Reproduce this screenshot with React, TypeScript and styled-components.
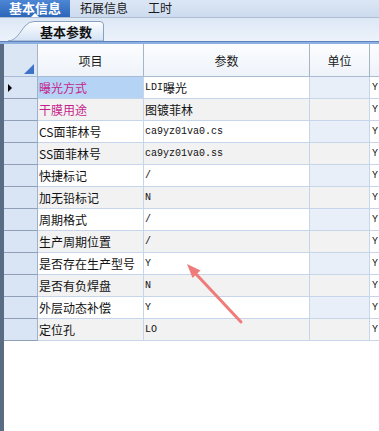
import React from "react";
import styled, { createGlobalStyle } from "styled-components";

const GlobalStyle = createGlobalStyle`
  html, body {
    margin: 0;
    padding: 0;
    background: #fff;
  }
  body {
    font-family: "Noto Sans CJK SC", "Liberation Sans", sans-serif;
  }
`;

const COLS = "34px 106px 166px 60px 40px";

const Page = styled.div`
  position: relative;
  width: 379px;
  height: 431px;
  overflow: hidden;
  display: flex;
  flex-direction: column;
  background: #fff;
`;

const TopBar = styled.div`
  display: flex;
  height: 17px;
  background: linear-gradient(#dce7f5, #ccdbef);
  border-bottom: 1px solid #aebdd1;
`;

const TopTab = styled.div<{ $active?: boolean }>`
  position: relative;
  display: flex;
  align-items: center;
  padding: 0 ${({ $active }) => ($active ? "9px" : "10px")} 2px;
  font-size: ${({ $active }) => ($active ? "13px" : "12px")};
  font-weight: ${({ $active }) => ($active ? "bold" : "normal")};
  line-height: 1;
  color: ${({ $active }) => ($active ? "#fff" : "#1a1a1a")};
  background: ${({ $active }) =>
    $active ? "linear-gradient(#4d86d4, #2c66ba)" : "transparent"};
`;

const Caret = styled.span`
  position: absolute;
  left: 50%;
  bottom: 0;
  margin-left: -4px;
  border-left: 4px solid transparent;
  border-right: 4px solid transparent;
  border-bottom: 4px solid #fff;
`;

const SubBar = styled.div`
  display: flex;
  align-items: flex-end;
  height: 23px;
  padding-left: 8px;
  background: linear-gradient(#dde8f6, #ecf2fb);
`;

const SubTab = styled.div`
  position: relative;
  display: flex;
  align-items: center;
  width: 96px;
  height: 20px;
  box-sizing: border-box;
  padding: 1px 0 0 32px;
  font-size: 13px;
  font-weight: bold;
  line-height: 1;
  color: #111;

  svg {
    position: absolute;
    left: 0;
    top: 0;
  }

  span {
    position: relative;
  }
`;

const BlueBand = styled.div`
  height: 2px;
  background: #8db0e2;
  border-top: 1px solid #5f84bb;
`;

const GridArea = styled.div`
  flex: 1;
  display: flex;
  flex-direction: column;
  border-left: 4px solid #5a6b84;
  background: #fff;
  overflow: hidden;
`;

const HeaderRow = styled.div`
  display: grid;
  grid-template-columns: ${COLS};
  height: 33px;
  box-sizing: border-box;
  border-bottom: 1px solid #a9bad3;
`;

const HeadCell = styled.div`
  display: flex;
  align-items: center;
  justify-content: center;
  padding-top: 2px;
  background: linear-gradient(#fcfdfe, #eef3fa);
  border-right: 1px solid #a7b4c6;
  font-size: 12px;
  line-height: 1;
  color: #1a1a1a;
`;

const Corner = styled.div`
  display: flex;
  align-items: flex-end;
  justify-content: flex-end;
  padding: 0 3px 2px 0;
  background: #dbe6f5;
  border-right: 1px solid #a7b4c6;
`;

const CornerMark = styled.span`
  width: 0;
  height: 0;
  border-left: 10px solid transparent;
  border-bottom: 10px solid #3d72c6;
`;

const Row = styled.div`
  display: grid;
  grid-template-columns: ${COLS};
  height: 22px;
`;

const RowHead = styled.div`
  display: flex;
  align-items: center;
  padding-left: 4px;
  background: #d9e5f4;
  border-right: 1px solid #9fb2cc;
  border-bottom: 1px solid #8f9fb8;
`;

const Pointer = styled.span`
  width: 0;
  height: 0;
  border-top: 4px solid transparent;
  border-bottom: 4px solid transparent;
  border-left: 4px solid #000;
`;

const Cell = styled.div<{ $bg: string; $color?: string; $pad?: number }>`
  display: flex;
  align-items: center;
  padding-left: ${({ $pad }) => $pad ?? 1}px;
  overflow: hidden;
  white-space: nowrap;
  background: ${({ $bg }) => $bg};
  color: ${({ $color }) => $color || "#111"};
  border-right: 1px solid #c6d5ea;
  border-bottom: 1px solid #c6d5ea;
  font-size: 12px;
  line-height: 1;
`;

const Latin = styled.span`
  font-family: "Liberation Mono", "DejaVu Sans Mono", monospace;
  font-size: 10px;
`;

const Arrow = styled.svg`
  position: absolute;
  left: 0;
  top: 0;
  pointer-events: none;
`;

type Param = {
  item: string;
  value: string;
  accent?: boolean;
};

const params: Param[] = [
  { item: "曝光方式", value: "LDI曝光", accent: true },
  { item: "干膜用途", value: "图镀菲林", accent: true },
  { item: "CS面菲林号", value: "ca9yz01va0.cs" },
  { item: "SS面菲林号", value: "ca9yz01va0.ss" },
  { item: "快捷标记", value: "/" },
  { item: "加无铅标记", value: "N" },
  { item: "周期格式", value: "/" },
  { item: "生产周期位置", value: "/" },
  { item: "是否存在生产型号", value: "Y" },
  { item: "是否有负焊盘", value: "N" },
  { item: "外层动态补偿", value: "Y" },
  { item: "定位孔", value: "LO" },
];

// latin runs go in the narrow mono font, CJK stays in the sans
function renderValue(text: string) {
  const parts = text.match(/[\x00-\x7f]+|[^\x00-\x7f]+/g) || [];
  return parts.map((p, i) =>
    /^[\x00-\x7f]+$/.test(p) ? <Latin key={i}>{p}</Latin> : <span key={i}>{p}</span>
  );
}

function App() {
  return (
    <Page>
      <GlobalStyle />
      <TopBar>
        <TopTab $active>
          基本信息
          <Caret />
        </TopTab>
        <TopTab>拓展信息</TopTab>
        <TopTab>工时</TopTab>
      </TopBar>

      <SubBar>
        <SubTab>
          <svg width="96" height="20" viewBox="0 0 96 20">
            <defs>
              <linearGradient id="tabFill" x1="0" y1="0" x2="0" y2="1">
                <stop offset="0" stopColor="#fdfeff" />
                <stop offset="1" stopColor="#d3e2f5" />
              </linearGradient>
            </defs>
            <path
              d="M0 20 C8 20 12 11 17 5 Q21 0.5 26 0.5 L92 0.5 Q95.5 0.5 95.5 4 L95.5 20 Z"
              fill="url(#tabFill)"
              stroke="#8aa0bf"
              strokeWidth="1"
            />
          </svg>
          <span>基本参数</span>
        </SubTab>
      </SubBar>
      <BlueBand />

      <GridArea>
        <HeaderRow>
          <Corner>
            <CornerMark />
          </Corner>
          <HeadCell>项目</HeadCell>
          <HeadCell>参数</HeadCell>
          <HeadCell>单位</HeadCell>
          <HeadCell />
        </HeaderRow>

        {params.map((p, i) => {
          const even = i % 2 === 1;
          const base = even ? "#f2f2f2" : "#fff";
          return (
            <Row key={p.item}>
              <RowHead>{i === 0 && <Pointer />}</RowHead>
              <Cell $bg={i === 0 ? "#b5d4f5" : base} $color={p.accent ? "#c51f8b" : undefined}>
                {p.item}
              </Cell>
              <Cell $bg={base}>{renderValue(p.value)}</Cell>
              <Cell $bg={even ? "#f2f2f2" : "#e8eff9"} />
              <Cell $bg="#fff" $pad={2}>
                <Latin>Y</Latin>
              </Cell>
            </Row>
          );
        })}
      </GridArea>

      <Arrow width="379" height="431">
        <line
          x1="241"
          y1="322"
          x2="196"
          y2="274"
          stroke="#ef7b7b"
          strokeWidth="3"
          strokeLinecap="round"
        />
        <polygon points="187,264 200.5,270.5 192.5,278" fill="#ef7b7b" />
      </Arrow>
    </Page>
  );
}

export default App;
